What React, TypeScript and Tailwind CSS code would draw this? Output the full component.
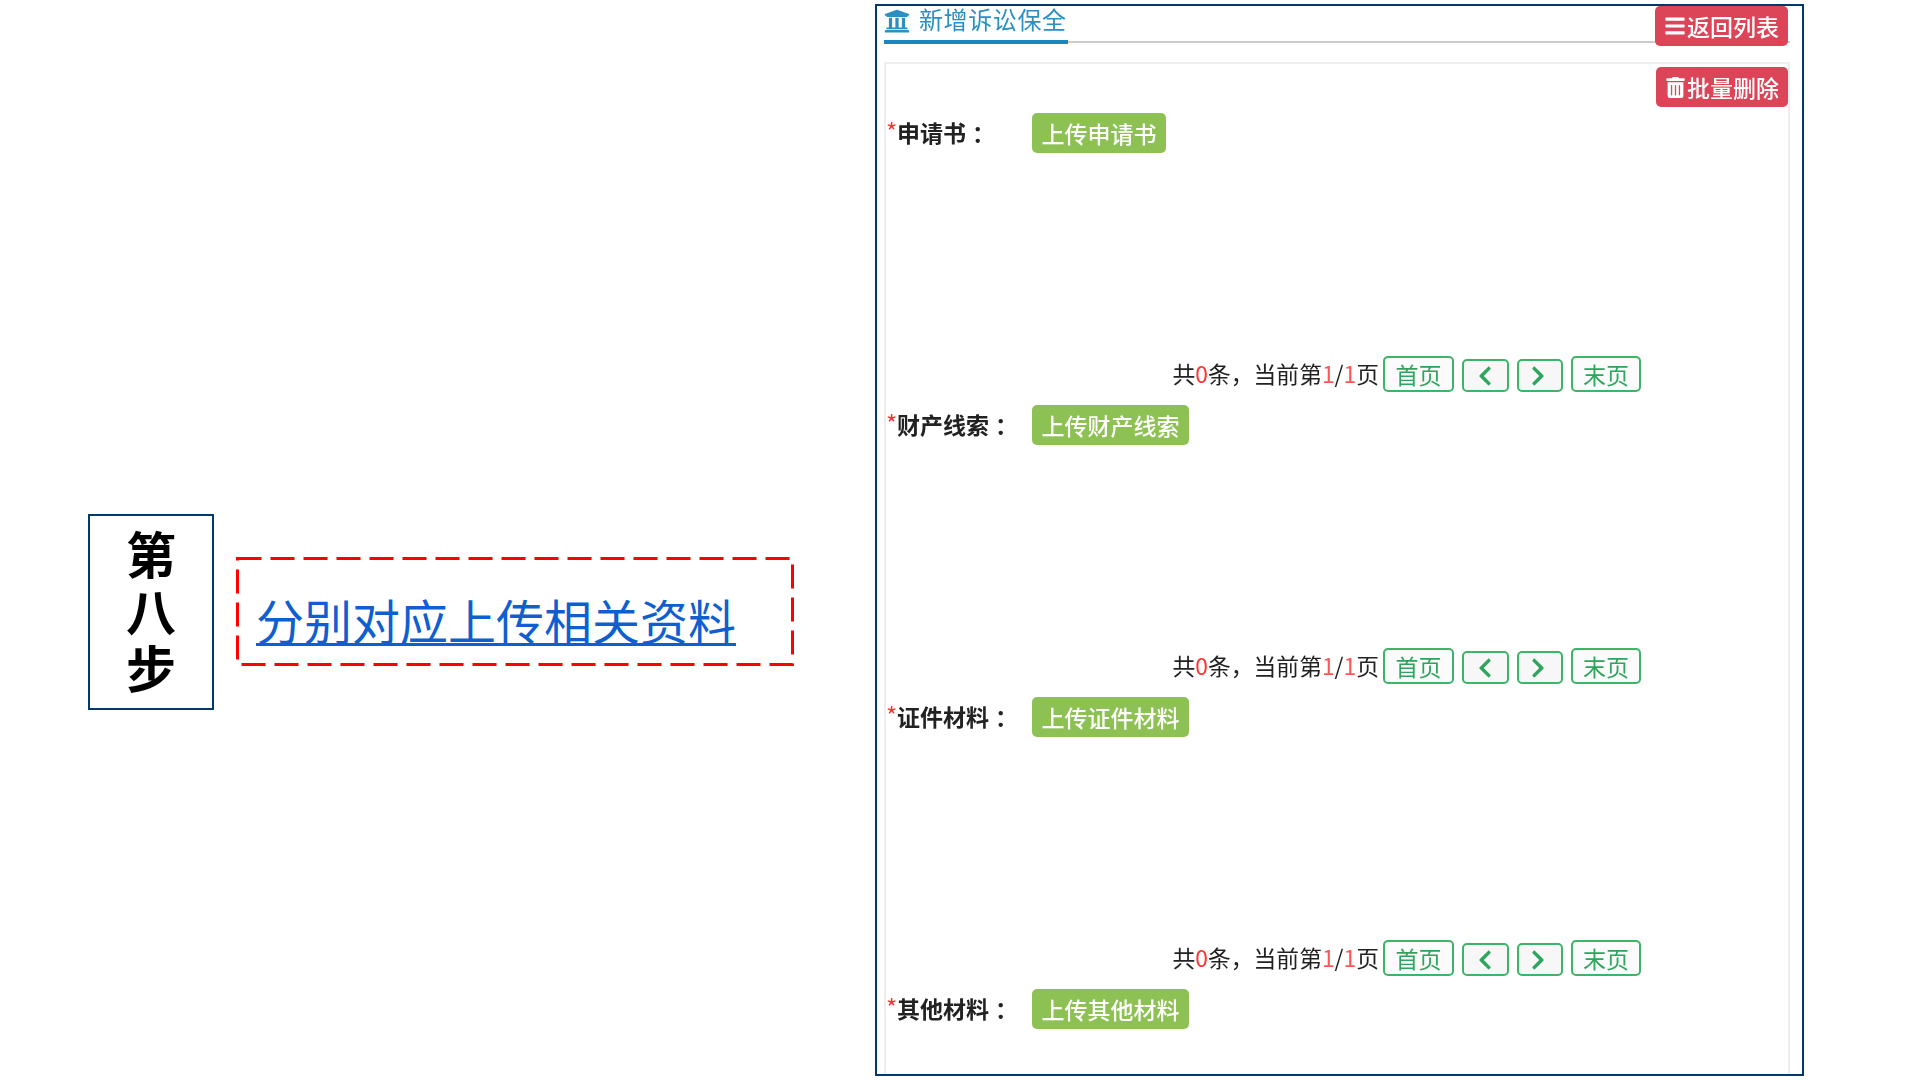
import { FaBars, FaChevronLeft, FaChevronRight, FaTrashAlt, FaUniversity } from 'react-icons/fa';

const sections = [
  { label: '申请书', upload: '上传申请书', width: 'w-[134px]' },
  { label: '财产线索', upload: '上传财产线索', width: 'w-[157px]' },
  { label: '证件材料', upload: '上传证件材料', width: 'w-[157px]' },
];

function Pager() {
  return (
    <div className="mr-[147px] flex h-[36px] items-center justify-end leading-none text-[#222]">
      <span className="mr-[4px] whitespace-nowrap text-[22.8px]">
        共<span className="text-[#f33]">0</span>条，当前第<span className="text-[#f55]">1</span>/<span className="text-[#f55]">1</span>页
      </span>
      <button className="flex h-[36px] w-[71px] items-center justify-center rounded-[5px] border-2 border-[#3cb568] bg-[#fbfbfb] text-[23px] text-[#2da55c]">
        首页
      </button>
      <button className="ml-[8px] mt-[3px] flex h-[33px] w-[47px] items-center justify-center rounded-[5px] border-2 border-[#3cb568] bg-[#f7f7f7] text-[#2da55c]">
        <FaChevronLeft className="mr-[2px]" size={22} />
      </button>
      <button className="ml-[8px] mt-[3px] flex h-[33px] w-[46px] items-center justify-center rounded-[5px] border-2 border-[#3cb568] bg-[#f7f7f7] text-[#2da55c]">
        <FaChevronRight className="mr-[5px]" size={22} />
      </button>
      <button className="ml-[8px] flex h-[36px] w-[70px] items-center justify-center rounded-[5px] border-2 border-[#3cb568] bg-[#fbfbfb] text-[23px] text-[#2da55c]">
        末页
      </button>
    </div>
  );
}

function UploadRow({ label, upload, width }: { label: string; upload: string; width: string }) {
  return (
    <div className="flex h-[40px] items-center">
      <div className="-mt-[2px] flex w-[146px] items-center whitespace-nowrap text-[23px] font-bold leading-none text-[#222]">
        <span className="-mt-[2px] w-[11px] shrink-0 text-[24px] font-normal text-[#f33]">*</span>
        {label}
        <span className="ml-[6px]">：</span>
      </div>
      <button className={`flex h-[40px] ${width} items-center justify-center rounded-[5px] bg-[#8dc153] text-[23px] font-medium leading-none text-white`}>
        {upload}
      </button>
    </div>
  );
}

export default function App() {
  return (
    <div className="flex h-[1080px] w-[1920px] overflow-hidden bg-white font-['Noto_Sans_CJK_SC','Liberation_Sans',sans-serif]">
      <div className="ml-[88px] mt-[514px] flex h-[196px] w-[126px] flex-col items-center justify-center gap-[7px] border-2 border-[#003a6c] pb-[6px] text-[50px] font-bold leading-[50px] text-black">
        <span>第</span>
        <span>八</span>
        <span>步</span>
      </div>

      <div className="relative ml-[22px] mt-[557px] h-[109px] w-[558px] pl-[20px] pt-[27px]">
        <svg className="absolute inset-0" width="558" height="109" fill="none">
          <rect x="1.5" y="1.5" width="555" height="106" stroke="#ff0000" strokeWidth="3" strokeDasharray="24 9" />
        </svg>
        <span className="whitespace-nowrap text-[48px] leading-[70px] text-[#0f5fd0] underline decoration-[2.5px] underline-offset-[3px] [text-decoration-skip-ink:none]">
          分别对应上传相关资料
        </span>
      </div>

      <div className="ml-[81px] mt-[4px] flex h-[1072px] w-[929px] flex-col border-2 border-[#003a6c] pl-[7px] pr-[12px]">
        <div className="flex h-[37px] shrink-0 items-start justify-between border-b-2 border-[#ccc] blur-[0.5px]">
          <div className="-mb-[3px] flex h-[38px] w-[184px] shrink-0 items-start border-b-4 border-[#1a86c0] text-[#2b8fc2]">
            <FaUniversity className="mt-[2px]" size={26} />
            <span className="ml-[9px] whitespace-nowrap text-[24px] leading-[26px] tracking-[0.6px]">新增诉讼保全</span>
          </div>
          <button className="-mb-[5px] mr-[2px] flex h-[40px] w-[133px] shrink-0 items-center justify-center gap-[1px] rounded-[5px] bg-[#dc4558] text-[23px] font-medium leading-none text-white">
            <FaBars size={22} />
            返回列表
          </button>
        </div>

        <div className="mt-[19px] flex min-h-0 flex-1 flex-col border-x-2 border-t-2 border-[#eee] blur-[0.5px]">
          <div className="mt-[3px] flex justify-end">
            <button className="flex h-[40px] w-[132px] items-center justify-center gap-[1px] rounded-[5px] bg-[#dc4558] text-[23px] font-medium leading-none text-white">
              <FaTrashAlt size={21} />
              批量删除
            </button>
          </div>
          <div className="mt-[6px]">
            {sections.map((section) => (
              <div key={section.label} className="mb-[13px]">
                <UploadRow {...section} />
                <div className="mt-[203px]">
                  <Pager />
                </div>
              </div>
            ))}
            <UploadRow label="其他材料" upload="上传其他材料" width="w-[157px]" />
          </div>
        </div>
      </div>
    </div>
  );
}
